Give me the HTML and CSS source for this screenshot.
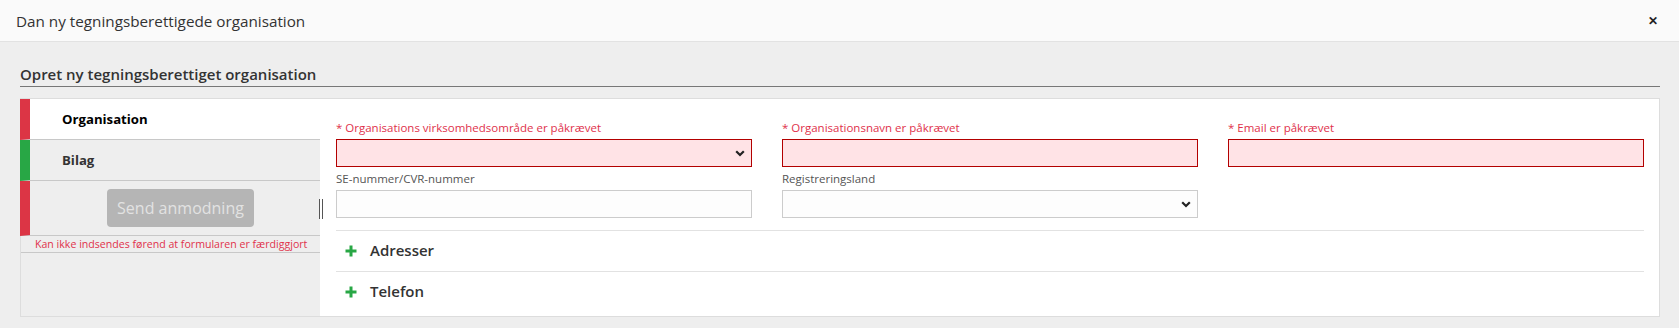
FILE: index.html
```html
<!DOCTYPE html>
<html lang="da">
<head>
<meta charset="utf-8">
<title>Dan ny tegningsberettigede organisation</title>
<link rel="stylesheet" href="styles.css">
</head>
<body>
<header class="modal-header">
  <span class="modal-title">Dan ny tegningsberettigede organisation</span>
  <span class="close">&#x2715;</span>
</header>
<main class="content">
  <h2 class="page-title">Opret ny tegningsberettiget organisation</h2>
  <div class="panel">
    <nav class="steps">
      <div class="step step-active status-red"><span class="step-label">Organisation</span></div>
      <div class="step status-green"><span class="step-label">Bilag</span></div>
      <div class="step step-send status-red">
        <button class="send-btn" disabled>Send anmodning</button>
        <span class="handle"></span>
      </div>
      <div class="send-error">Kan ikke indsendes førend at formularen er færdiggjort</div>
    </nav>
    <section class="form">
      <div class="grid">
        <div class="field">
          <label class="lbl lbl-error">* Organisations virksomhedsområde er påkrævet</label>
          <div class="box box-error box-select">
            <svg class="chev" width="10" height="7" viewBox="0 0 10 7"><path d="M1.2 1.2 L5 5 L8.8 1.2" fill="none" stroke="#222" stroke-width="2.2"/></svg>
          </div>
        </div>
        <div class="field">
          <label class="lbl lbl-error">* Organisationsnavn er påkrævet</label>
          <div class="box box-error"></div>
        </div>
        <div class="field">
          <label class="lbl lbl-error">* Email er påkrævet</label>
          <div class="box box-error"></div>
        </div>
        <div class="field">
          <label class="lbl">SE-nummer/CVR-nummer</label>
          <div class="box"></div>
        </div>
        <div class="field">
          <label class="lbl">Registreringsland</label>
          <div class="box box-select">
            <svg class="chev" width="10" height="7" viewBox="0 0 10 7"><path d="M1.2 1.2 L5 5 L8.8 1.2" fill="none" stroke="#222" stroke-width="2.2"/></svg>
          </div>
        </div>
      </div>
      <div class="section-row">
        <svg class="plus" width="12" height="12" viewBox="0 0 12 12"><path d="M6 0.5 V11.5 M0.5 6 H11.5" stroke="#28a745" stroke-width="3"/></svg>
        <span class="section-label">Adresser</span>
      </div>
      <div class="section-row">
        <svg class="plus" width="12" height="12" viewBox="0 0 12 12"><path d="M6 0.5 V11.5 M0.5 6 H11.5" stroke="#28a745" stroke-width="3"/></svg>
        <span class="section-label">Telefon</span>
      </div>
    </section>
  </div>
</main>
</body>
</html>
```
FILE: styles.css
```css
* { box-sizing: border-box; }
html, body { margin: 0; padding: 0; }
body {
  background: #eeeeee;
  font-family: "Open Sans", "Noto Sans", sans-serif;
  color: #333;
  width: 1679px;
  height: 328px;
  overflow: hidden;
}
.modal-header {
  height: 42px;
  background: #fafafa;
  border-bottom: 1px solid #e2e2e2;
  display: flex;
  align-items: center;
  justify-content: space-between;
  padding: 0 21px 0 16px;
}
.modal-title {
  font-size: 15.25px;
  color: #333;
  line-height: 20px;
}
.close {
  font-size: 12px;
  font-weight: 700;
  color: #222;
  line-height: 12px;
}
.content {
  padding: 0 19px 0 20px;
}
.page-title {
  margin: 20px 0 0 0;
  padding-left: 0;
  font-size: 15px;
  font-weight: 600;
  line-height: 24px;
  height: 25px;
  border-bottom: 1px solid #777;
  color: #333;
}
.panel {
  margin-top: 11px;
  border: 1px solid #dddddd;
  display: flex;
  height: 219px;
}
.steps {
  width: 299px;
  flex: none;
  background: #eeeeee;
  display: flex;
  flex-direction: column;
}
.step {
  position: relative;
  display: flex;
  align-items: center;
  height: 41px;
  border-bottom: 1px solid #c8c8c8;
  border-left: 10px solid #dc3545;
  margin-left: -1px;
}
.step.status-green { border-left-color: #28a745; }
.step-active { background: #fff; }
.step-label {
  padding-left: 32px;
  font-size: 13.2px;
  font-weight: 700;
  color: #333;
}
.step-active .step-label { color: #000; }
.step-send {
  height: 55px;
  padding-left: 77px;
}
.send-btn {
  width: 147px;
  height: 38px;
  border: 0;
  border-radius: 4px;
  background: #b5b5b5;
  color: #e2e2e2;
  font-family: inherit;
  font-size: 16px;
  padding: 0;
}
.handle {
  position: absolute;
  right: -3px;
  top: 18px;
  width: 4px;
  height: 20px;
  border-left: 1px solid #555;
  border-right: 1px solid #555;
}
.send-error {
  height: 17px;
  border-bottom: 1px solid #c8c8c8;
  font-size: 10.6px;
  line-height: 16px;
  color: #e0314b;
  padding-left: 14px;
}
.form {
  flex: 1;
  background: #fff;
  padding: 20px 15px 0 16px;
}
.grid {
  display: grid;
  grid-template-columns: 1fr 1fr 1fr;
  column-gap: 30px;
  row-gap: 3px;
}
.field {
  display: flex;
  flex-direction: column;
}
.lbl {
  font-size: 11.5px;
  line-height: 18px;
  color: #555;
  margin-bottom: 2px;
}
.lbl-error { color: #e0314b; }
.box {
  height: 28px;
  border: 1px solid #cccccc;
  background: #fdfdfd;
  display: flex;
  align-items: center;
  justify-content: flex-end;
  padding-right: 6px;
}
.box-error {
  border-color: #b30000;
  background: #ffe3e6;
}
.grid + .section-row { margin-top: 12px; }
.section-row {
  height: 41px;
  border-top: 1px solid #e2e2e2;
  display: flex;
  align-items: center;
  padding-left: 9px;
  padding-bottom: 3px;
}
.plus { flex: none; margin-top: 2px; }
.section-label {
  margin-left: 13px;
  font-size: 15px;
  font-weight: 600;
  color: #333;
}
```
